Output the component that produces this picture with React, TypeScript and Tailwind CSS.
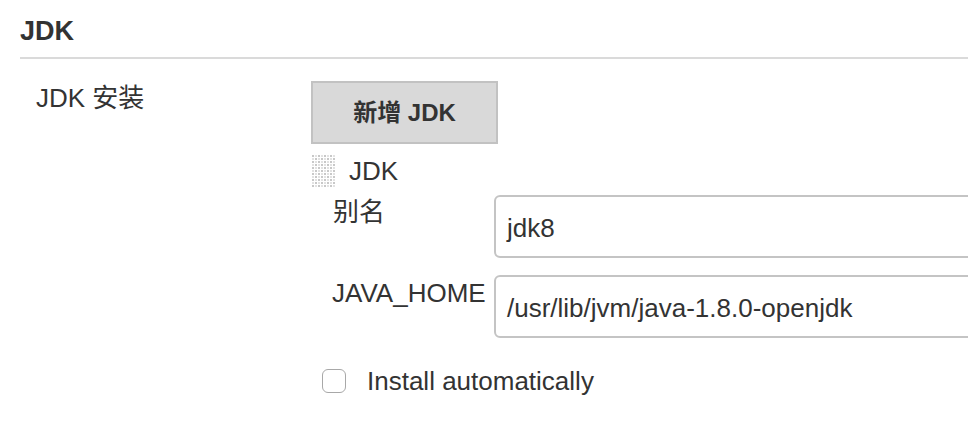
import React from "react";

function Grip() {
  const dots: React.ReactNode[] = [];
  for (let r = 0; r < 11; r++) {
    for (let c = 0; c < 8; c++) {
      dots.push(
        <rect key={`${r}-${c}`} x={c * 3} y={r * 3} width={2} height={2} fill={(r + c) % 2 === 0 ? "#c8c8c8" : "#e2e2e2"} />
      );
    }
  }
  return (
    <svg width="24" height="33" viewBox="0 0 24 33" className="block">
      {dots}
    </svg>
  );
}

export default function App() {
  return (
    <div
      className="w-[968px] h-[422px] overflow-hidden bg-white text-[#333] pl-[20px] pt-[16px]"
      style={{ fontFamily: '"Liberation Sans", Arial, "Noto Sans CJK SC", sans-serif' }}
    >
      <div className="text-[27px] leading-[31px] font-bold">JDK</div>
      <div className="mt-[10px] border-t-2 border-[#dadada]" />
      <div className="flex mt-[22px]">
        <div className="w-[291px] shrink-0 pl-[16px] pt-[2px] text-[26px] leading-[30px]">JDK 安装</div>
        <div className="flex flex-col shrink-0">
          <div className="w-[187px] h-[63px] bg-[#d9d9d9] border-2 border-[#c2c2c2] flex items-center justify-center text-[24px] font-bold text-[#333]">
            新增 JDK
          </div>
          <div className="flex items-start mt-[11px] h-[34px]">
            <div className="ml-[1px]">
              <Grip />
            </div>
            <div className="ml-[13px] text-[26px] leading-[30px] pt-[1px]">JDK</div>
          </div>
          <div className="flex flex-col gap-[17px] mt-[6px]">
            <div className="flex">
              <div className="w-[183px] shrink-0 pl-[22px] pt-[2px] text-[26px] leading-[30px]">别名</div>
              <div className="w-[500px] shrink-0 h-[63px] border-2 border-[#c4c4c4] rounded-[6px] flex items-center pl-[11px] text-[26px] pt-[4px]">
                jdk8
              </div>
            </div>
            <div className="flex">
              <div className="w-[183px] shrink-0 pl-[21px] pt-[3px] text-[26px] leading-[30px]">JAVA_HOME</div>
              <div className="w-[500px] shrink-0 h-[63px] border-2 border-[#c4c4c4] rounded-[6px] flex items-center pl-[11px] text-[26px] pt-[4px]">
                /usr/lib/jvm/java-1.8.0-openjdk
              </div>
            </div>
          </div>
          <div className="flex items-center mt-[28px] ml-[11px]">
            <div className="w-[24px] h-[24px] border-[1.5px] border-[#a8a8a8] rounded-[6px] bg-white" />
            <div className="ml-[21px] text-[26px] leading-[30px]">Install automatically</div>
          </div>
        </div>
      </div>
    </div>
  );
}
